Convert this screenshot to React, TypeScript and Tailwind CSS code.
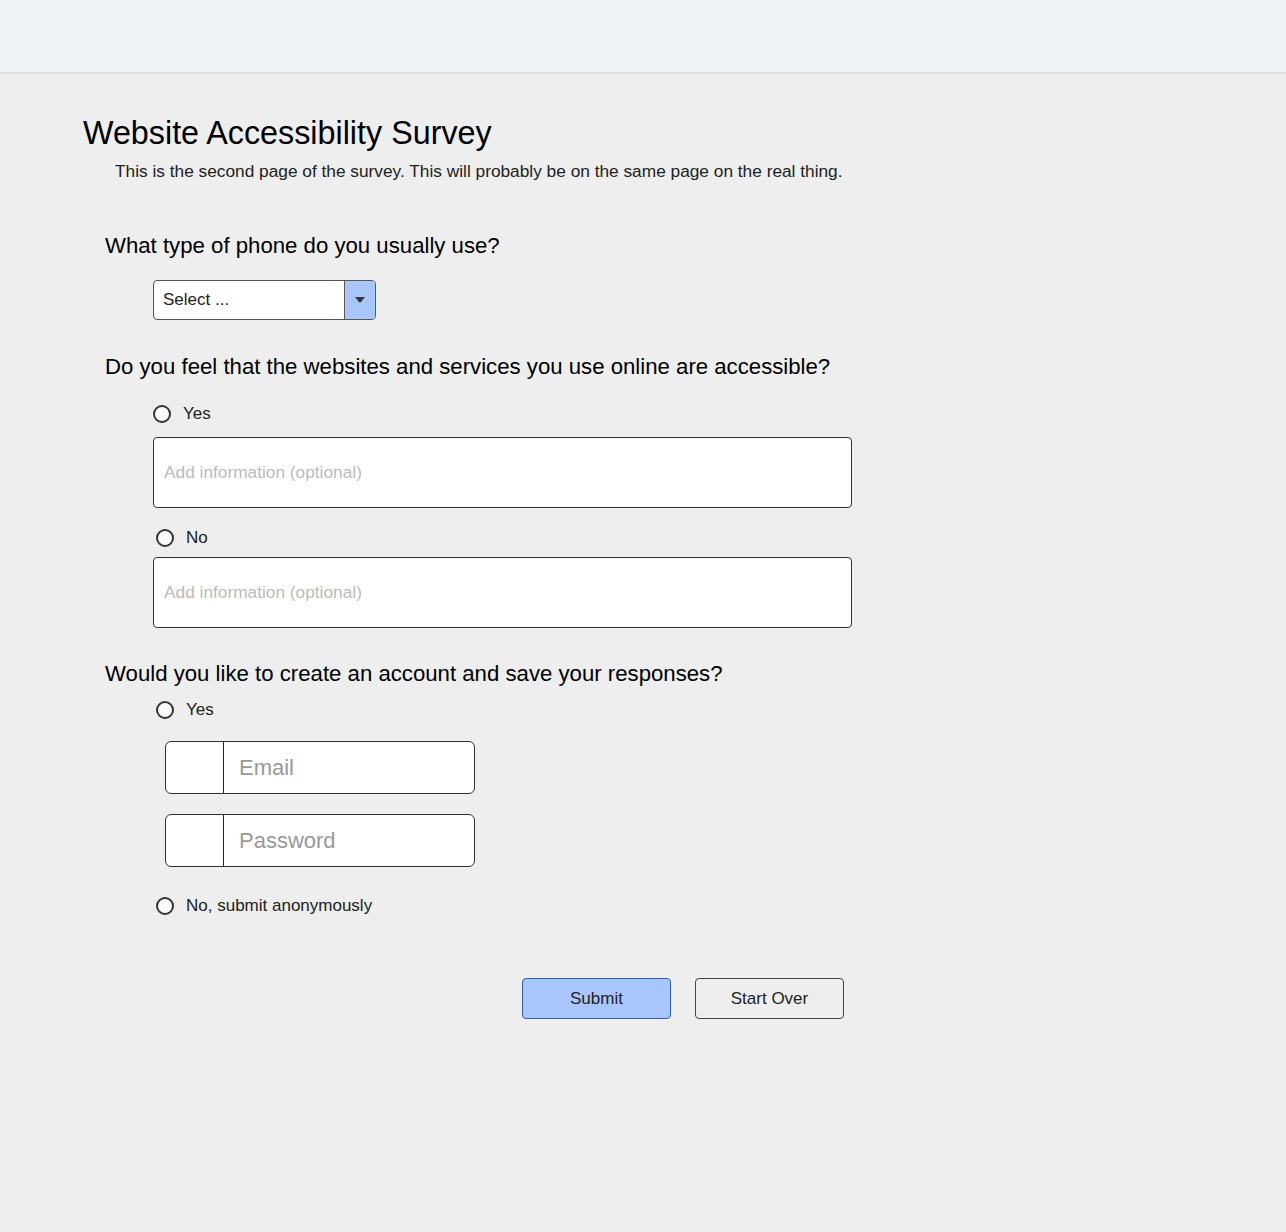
const font = { fontFamily: '"Liberation Sans", Arial, sans-serif' };

function Radio({ label, className = "" }: { label: string; className?: string }) {
  return (
    <label className={`flex items-center gap-3 h-6 ${className}`}>
      <span className="w-[18px] h-[18px] rounded-full border-2 border-[#333] bg-white shrink-0" />
      <span className="text-[17px] text-[#222]">{label}</span>
    </label>
  );
}

function InfoBox() {
  return (
    <div className="w-[699px] h-[71px] bg-white border border-[#333] rounded-[4px] flex items-center px-[10px]">
      <span className="text-[17.3px] text-[#bbbbbb]">Add information (optional)</span>
    </div>
  );
}

function Field({ placeholder }: { placeholder: string }) {
  return (
    <div className="w-[310px] h-[53px] bg-white border border-[#333] rounded-[6px] flex">
      <div className="w-[58px] border-r border-[#222]" />
      <div className="flex items-center pl-[15px] text-[22px] text-[#999]">{placeholder}</div>
    </div>
  );
}

export default function App() {
  return (
    <div style={font} className="min-h-[1232px] bg-[#eeeeee] text-black">
      <div className="h-[74px] bg-[#eef1f6] border-b-2 border-[#dce0e4]" />
      <div className="pl-[83px] pt-[40px]">
        <h1 className="text-[32.3px] leading-[38px] text-black">Website Accessibility Survey</h1>
        <p className="ml-[32px] mt-[9px] text-[17.3px] leading-[20px] text-[#222]">
          This is the second page of the survey. This will probably be on the same page on the real thing.
        </p>

        <div className="ml-[22px] mt-[52px]">
          <h2 className="text-[22.2px] leading-[26px]">What type of phone do you usually use?</h2>
          <div className="ml-[48px] mt-[21px] w-[223px] h-[40px] bg-white border border-[#555] rounded-[4px] flex overflow-hidden">
            <div className="flex-1 flex items-center pl-[9px] text-[17px] text-[#222]">Select ...</div>
            <div className="w-[31px] bg-[#a9c6fb] border-l border-[#555] flex items-center justify-center">
              <svg width="10" height="6" viewBox="0 0 10 6">
                <path d="M0 0 L10 0 L5 6 Z" fill="#333" />
              </svg>
            </div>
          </div>

          <h2 className="mt-[34px] text-[22.2px] leading-[26px]">
            Do you feel that the websites and services you use online are accessible?
          </h2>
          <div className="ml-[48px]">
            <Radio label="Yes" className="mt-[22px]" />
            <div className="mt-[11px]">
              <InfoBox />
            </div>
            <Radio label="No" className="mt-[18px] ml-[3px] gap-[12px]" />
            <div className="mt-[7px]">
              <InfoBox />
            </div>
          </div>

          <h2 className="mt-[33px] text-[22.2px] leading-[26px]">
            Would you like to create an account and save your responses?
          </h2>
          <div className="ml-[51px]">
            <Radio label="Yes" className="mt-[11px]" />
            <div className="ml-[9px] mt-[19px] flex flex-col gap-[20px]">
              <Field placeholder="Email" />
              <Field placeholder="Password" />
            </div>
            <Radio label="No, submit anonymously" className="mt-[27px]" />
          </div>

          <div className="ml-[417px] mt-[60px] flex gap-[24px]">
            <button className="w-[149px] h-[41px] bg-[#a9c6fb] border border-[#2a5fc0] rounded-[4px] text-[17px] text-[#222]">
              Submit
            </button>
            <button className="w-[149px] h-[41px] bg-transparent border border-[#444] rounded-[4px] text-[17px] text-[#222]">
              Start Over
            </button>
          </div>
        </div>
      </div>
    </div>
  );
}
